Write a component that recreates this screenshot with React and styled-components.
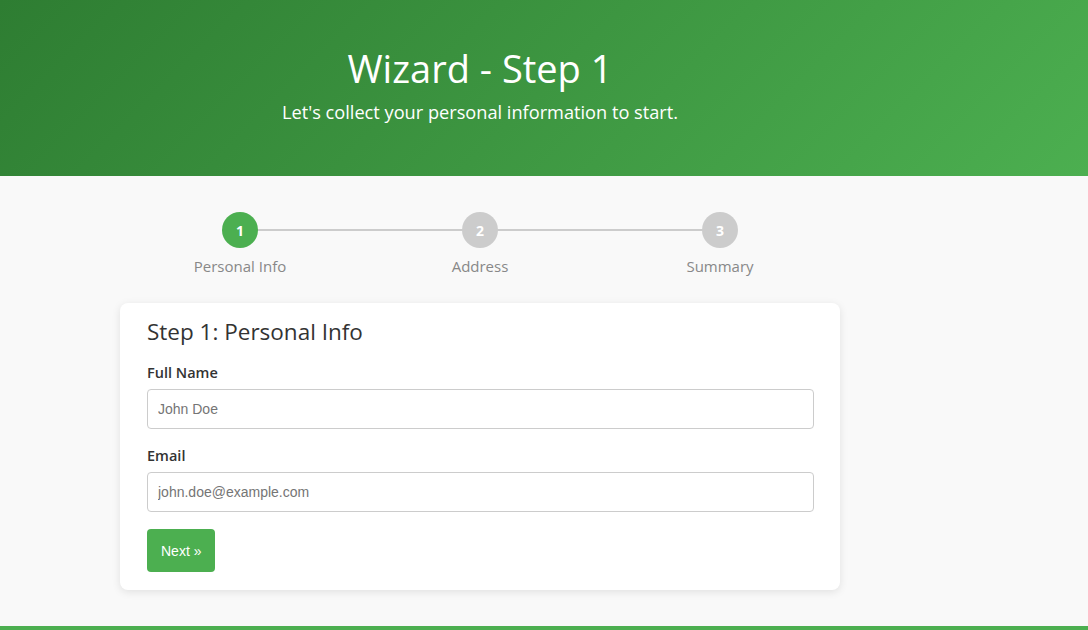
import React from 'react';
import styled, { createGlobalStyle } from 'styled-components';

const GlobalStyle = createGlobalStyle`
  * { box-sizing: border-box; }
  body {
    margin: 0;
    background: #f9f9f9;
    font-family: "Open Sans", "Liberation Sans", sans-serif;
    color: #333;
  }
`;

const steps = [
  { n: 1, label: 'Personal Info', active: true },
  { n: 2, label: 'Address' },
  { n: 3, label: 'Summary' },
];

export default function App() {
  return (
    <>
      <GlobalStyle />
      <Page>
        <Header>
          <Inner>
            <Title>Wizard - Step 1</Title>
            <Subtitle>Let's collect your personal information to start.</Subtitle>
          </Inner>
        </Header>
        <Main>
          <Inner>
            <Stepper>
              {steps.map((s, i) => (
                <Step key={s.n} $first={i === 0} $last={i === steps.length - 1}>
                  <Circle $active={s.active}>{s.n}</Circle>
                  <StepLabel>{s.label}</StepLabel>
                </Step>
              ))}
            </Stepper>
            <Card>
              <CardTitle>Step 1: Personal Info</CardTitle>
              <Field>
                <Label>Full Name</Label>
                <Input type="text" placeholder="John Doe" />
              </Field>
              <Field>
                <Label>Email</Label>
                <Input type="email" placeholder="john.doe@example.com" />
              </Field>
              <Button>Next »</Button>
            </Card>
          </Inner>
        </Main>
        <Footer />
      </Page>
    </>
  );
}

const Page = styled.div`
  min-height: 630px;
  display: flex;
  flex-direction: column;
`;

const Inner = styled.div`
  width: 720px;
  margin-left: 120px;
`;

const Header = styled.header`
  height: 176px;
  padding-top: 44px;
  background: linear-gradient(135deg, #2e7d32 0%, #4caf50 100%);
  color: #fff;
  text-align: center;
`;

const Title = styled.h1`
  margin: 0;
  font-size: 38px;
  font-weight: 500;
  line-height: 48px;
`;

const Subtitle = styled.p`
  margin: 8px 0 0;
  font-size: 18.2px;
  line-height: 24px;
`;

const Main = styled.main`
  flex: 1;
  padding-top: 36px;
`;

const Stepper = styled.div`
  display: grid;
  grid-template-columns: repeat(3, 1fr);
  margin-bottom: 27px;
`;

const Step = styled.div`
  position: relative;
  display: flex;
  flex-direction: column;
  align-items: center;

  &::before {
    content: '';
    position: absolute;
    top: 17px;
    height: 2px;
    background: #ccc;
    left: ${(p) => (p.$first ? '50%' : '0')};
    right: ${(p) => (p.$last ? '50%' : '0')};
  }
`;

const Circle = styled.div`
  position: relative;
  z-index: 1;
  width: 36px;
  height: 36px;
  border-radius: 50%;
  background: ${(p) => (p.$active ? '#4caf50' : '#ccc')};
  color: #fff;
  font-size: 14px;
  font-weight: 700;
  display: flex;
  align-items: center;
  justify-content: center;
`;

const StepLabel = styled.span`
  margin-top: 8px;
  font-size: 15px;
  color: #888;
  line-height: 20px;
`;

const Card = styled.section`
  background: #fff;
  border-radius: 8px;
  box-shadow: 0 2px 8px rgba(0, 0, 0, 0.1);
  padding: 15px 26px 18px 27px;
`;

const CardTitle = styled.h2`
  margin: 0 0 17px;
  font-size: 22.5px;
  font-weight: 500;
  line-height: 28px;
  color: #333;
`;

const Field = styled.div`
  margin-bottom: 17px;
`;

const Label = styled.label`
  display: block;
  font-size: 14.5px;
  font-weight: 600;
  color: #333;
  line-height: 20px;
  margin-bottom: 6px;
`;

const Input = styled.input`
  display: block;
  width: 100%;
  height: 40px;
  padding: 0 10px;
  border: 1px solid #ccc;
  border-radius: 4px;
  font-family: "Liberation Sans", Arial, sans-serif;
  font-size: 14px;
  color: #333;

  &::placeholder {
    color: #757575;
  }
`;

const Button = styled.button`
  height: 43px;
  padding: 0 14px;
  border: none;
  border-radius: 4px;
  background: #4caf50;
  color: #fff;
  font-family: "Liberation Sans", Arial, sans-serif;
  font-size: 14px;
  cursor: pointer;
`;

const Footer = styled.footer`
  height: 4px;
  background: #4caf50;
`;
